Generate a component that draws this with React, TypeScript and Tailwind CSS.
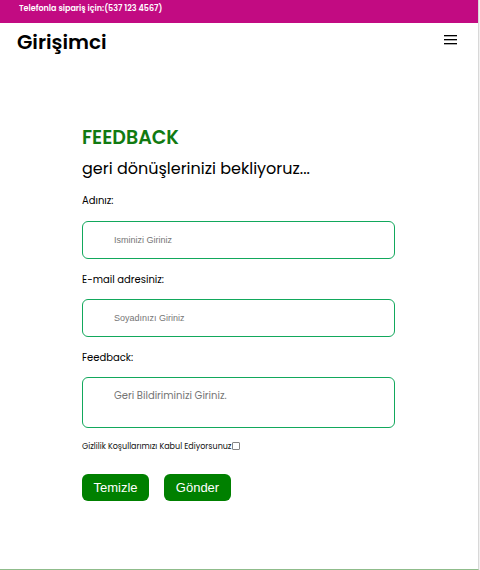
import React from "react";

const inputClass =
  "block w-full rounded-md border border-[#12a85c] bg-white px-[31px] text-black outline-none placeholder:text-[#757575] placeholder:opacity-100";
const labelClass = "block text-[10px] leading-4 text-black";
const buttonClass =
  "h-[27px] w-[67px] rounded-md bg-[#008000] text-center font-['Liberation_Sans',Arial,sans-serif] text-[13px] leading-none text-white";

export default function App() {
  return (
    <div className="flex min-h-screen bg-[#f1f1f1] pr-px font-[Poppins,Inter,sans-serif] text-black">
      <div className="flex grow flex-col border-r border-b border-r-[#d8d8d8] border-b-[#8fbc8b] bg-white">
        <div className="h-[23px] bg-[#c20b82] px-[19px] text-[8px] leading-[18px] font-semibold text-white">
          <p>Telefonla sipariş için:(537 123 4567)</p>
        </div>
        <header className="flex h-[38px] items-center justify-between pr-[21px] pl-[17px]">
          <a href="#" className="text-[20px] font-semibold">
            Girişimci
          </a>
          <button type="button" aria-label="Menü" className="mb-1">
            <svg width="13" height="10" viewBox="0 0 13 10" className="block" shapeRendering="crispEdges">
              <path d="M0 0h13v1H0zM0 4h13v1H0zM0 8h13v1H0z" fill="#000" />
              <path d="M0 1h13v1H0zM0 5h13v1H0zM0 9h13v1H0z" fill="#aaa" />
            </svg>
          </button>
        </header>
        <main className="pt-[63px] pr-[83px] pl-[82px]">
          <h1 className="text-[19px] leading-7 font-semibold text-[#117a11]">FEEDBACK</h1>
          <h2 className="mt-[3px] text-[16px] leading-7">geri dönüşlerinizi bekliyoruz...</h2>
          <form className="mt-2.5" onSubmit={(e) => e.preventDefault()}>
            <label htmlFor="name" className={labelClass}>
              Adınız:
            </label>
            <input
              id="name"
              type="text"
              placeholder="Isminizi Giriniz"
              className={`${inputClass} mt-3 h-[38px] font-['Liberation_Sans',Arial,sans-serif] text-[9px]`}
            />
            <label htmlFor="email" className={`${labelClass} mt-[13px]`}>
              E-mail adresiniz:
            </label>
            <input
              id="email"
              type="email"
              placeholder="Soyadınızı Giriniz"
              className={`${inputClass} mt-[11px] h-[38px] font-['Liberation_Sans',Arial,sans-serif] text-[9px]`}
            />
            <label htmlFor="feedback" className={`${labelClass} mt-[13px]`}>
              Feedback:
            </label>
            <textarea
              id="feedback"
              placeholder="Geri Bildiriminizi Giriniz."
              className={`${inputClass} mt-[11px] h-[51px] resize-none py-2.5 text-[10px] leading-4`}
            />
            <div className="mt-[11px] flex h-4 items-center">
              <label htmlFor="terms" className="text-[8px] text-[#111]">
                Gizlilik Koşullarımızı Kabul Ediyorsunuz
              </label>
              <input
                id="terms"
                type="checkbox"
                className="mb-0.5 size-2 appearance-none rounded-[1px] border border-[#858585] bg-white checked:bg-[#0075ff]"
              />
            </div>
            <div className="mt-[19px] flex gap-[15px]">
              <button type="reset" className={buttonClass}>
                Temizle
              </button>
              <button type="submit" className={buttonClass}>
                Gönder
              </button>
            </div>
          </form>
        </main>
      </div>
    </div>
  );
}
